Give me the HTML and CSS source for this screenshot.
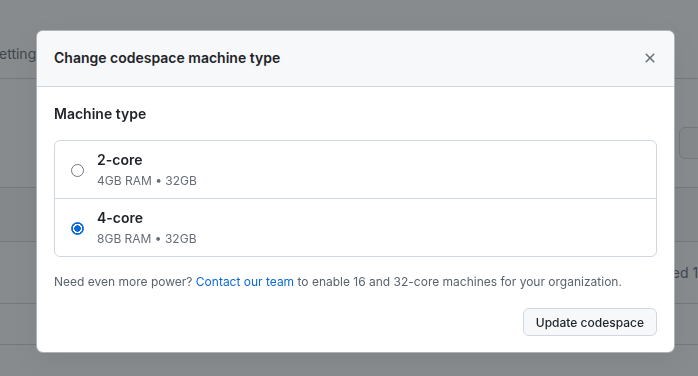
FILE: index.html
```html
<!DOCTYPE html>
<html lang="en">

<head>
    <meta charset="UTF-8">
    <meta name="viewport" content="width=device-width, initial-scale=1.0">
    <title>Change codespace machine type</title>
    <link rel="stylesheet" href="styles.css">
</head>

<body>
    <!-- page behind the dialog -->
    <div class="page">
        <div class="page-head"><span class="crumb">Settings</span></div>
        <div class="toolbar"><span class="ghost-btn">Create</span></div>
        <div class="table-head"></div>
        <div class="table-row"><span class="row-note">Allowed 16-core</span></div>
        <div class="table-row short"></div>
    </div>

    <div class="backdrop">
        <div class="dialog">
            <div class="dialog-header">
                <h1 class="dialog-title">Change codespace machine type</h1>
                <button class="close-btn" aria-label="Close">
                    <svg width="16" height="16" viewBox="0 0 16 16" fill="currentColor">
                        <path d="M3.72 3.72a.75.75 0 0 1 1.06 0L8 6.94l3.22-3.22a.749.749 0 0 1 1.275.326.749.749 0 0 1-.215.734L9.06 8l3.22 3.22a.749.749 0 0 1-.326 1.275.749.749 0 0 1-.734-.215L8 9.06l-3.22 3.22a.751.751 0 0 1-1.042-.018.751.751 0 0 1-.018-1.042L6.94 8 3.720 4.78a.75.75 0 0 1 0-1.06Z"></path>
                    </svg>
                </button>
            </div>
            <div class="dialog-body">
                <h2 class="section-title">Machine type</h2>
                <div class="machine-list">
                    <label class="machine">
                        <input type="radio" name="machine" class="radio">
                        <span class="machine-info">
                            <span class="machine-name">2-core</span>
                            <span class="machine-spec">4GB RAM &bull; 32GB</span>
                        </span>
                    </label>
                    <label class="machine">
                        <input type="radio" name="machine" class="radio" checked>
                        <span class="machine-info">
                            <span class="machine-name">4-core</span>
                            <span class="machine-spec">8GB RAM &bull; 32GB</span>
                        </span>
                    </label>
                </div>
                <p class="note">Need even more power? <a href="#">Contact our team</a> to enable 16 and 32-core machines for your organization.</p>
                <div class="actions">
                    <button class="btn">Update codespace</button>
                </div>
            </div>
        </div>
    </div>
</body>

</html>
```

FILE: styles.css
```css
* {
    margin: 0;
    padding: 0;
    box-sizing: border-box;
}

body {
    font-family: 'Inter', 'Liberation Sans', sans-serif;
    font-size: 14px;
    color: #1f2328;
    background: #fff;
    height: 100vh;
    overflow: hidden;
}

/* Page behind */
.page {
    width: 100%;
}

.page-head {
    height: 79px;
    border-bottom: 1px solid #d0d7de;
    padding-top: 45px;
}

.crumb {
    margin-left: -10px;
    color: #656d76;
    font-size: 14px;
    line-height: 18px;
}

.toolbar {
    height: 108px;
    display: flex;
    justify-content: flex-end;
    padding-top: 48px;
}

.ghost-btn {
    height: 32px;
    width: 64px;
    margin-right: -45px;
    padding: 6px 0 0 18px;
    border: 1px solid #d0d7de;
    border-radius: 6px;
    background: #f6f8fa;
    font-weight: 500;
}

.table-head {
    height: 54px;
    border-top: 1px solid #d0d7de;
    background: #f6f8fa;
}

.table-row {
    height: 62px;
    border-top: 1px solid #d0d7de;
    display: flex;
    align-items: center;
    padding-left: 636px;
    white-space: nowrap;
    color: #656d76;
}

.table-row.short {
    height: 42px;
    border-bottom: 1px solid #d0d7de;
}

/* Dialog */
.backdrop {
    position: fixed;
    inset: 0;
    background: rgba(31, 35, 40, 0.53);
    padding: 31px 0 0 37px;
}

.dialog {
    width: 637px;
    background: #fff;
    border-radius: 6px;
    overflow: hidden;
    box-shadow: 0 0 0 1px rgba(208, 215, 222, 0.55), 0 8px 24px rgba(66, 74, 83, 0.12);
}

.dialog-header {
    height: 56px;
    display: flex;
    align-items: center;
    justify-content: space-between;
    padding: 0 8px 1px 17px;
    background: #f6f8fa;
    border-bottom: 1px solid #d0d7de;
}

.dialog-title {
    font-size: 14px;
    font-weight: 600;
    line-height: 20px;
}

.close-btn {
    width: 32px;
    height: 32px;
    border: none;
    background: transparent;
    color: #656d76;
    display: flex;
    align-items: center;
    justify-content: center;
}

.dialog-body {
    padding: 17px 17px 16px 17px;
}

.section-title {
    font-size: 14px;
    font-weight: 600;
    line-height: 20px;
    margin-bottom: 16px;
}

.machine-list {
    border: 1px solid #d0d7de;
    border-radius: 6px;
}

.machine {
    display: flex;
    align-items: center;
    gap: 13px;
    padding: 9px 16px 8px 16px;
}

.machine + .machine {
    border-top: 1px solid #d0d7de;
}

.radio {
    appearance: none;
    width: 13px;
    height: 13px;
    border-radius: 50%;
    border: 1px solid #6e7781;
    background: #fff;
    flex-shrink: 0;
}

.radio:checked {
    border-color: #0969da;
    background: radial-gradient(circle, #0969da 0 3px, #fff 3.5px 4.5px, #0969da 5px);
}

.machine-info {
    display: flex;
    flex-direction: column;
    gap: 2px;
}

.machine-name {
    font-weight: 600;
    line-height: 20px;
}

.machine-spec {
    font-size: 12px;
    line-height: 18px;
    color: #656d76;
}

.note {
    margin-top: 16px;
    font-size: 12px;
    line-height: 18px;
    color: #59636e;
}

.note a {
    color: #0969da;
    text-decoration: none;
}

.actions {
    display: flex;
    justify-content: flex-end;
    margin-top: 17px;
}

.btn {
    height: 28px;
    padding: 0 12px;
    font-family: inherit;
    font-size: 12px;
    font-weight: 500;
    color: #1f2328;
    background: #f6f8fa;
    border: 1px solid #d0d7de;
    border-radius: 6px;
}
```
